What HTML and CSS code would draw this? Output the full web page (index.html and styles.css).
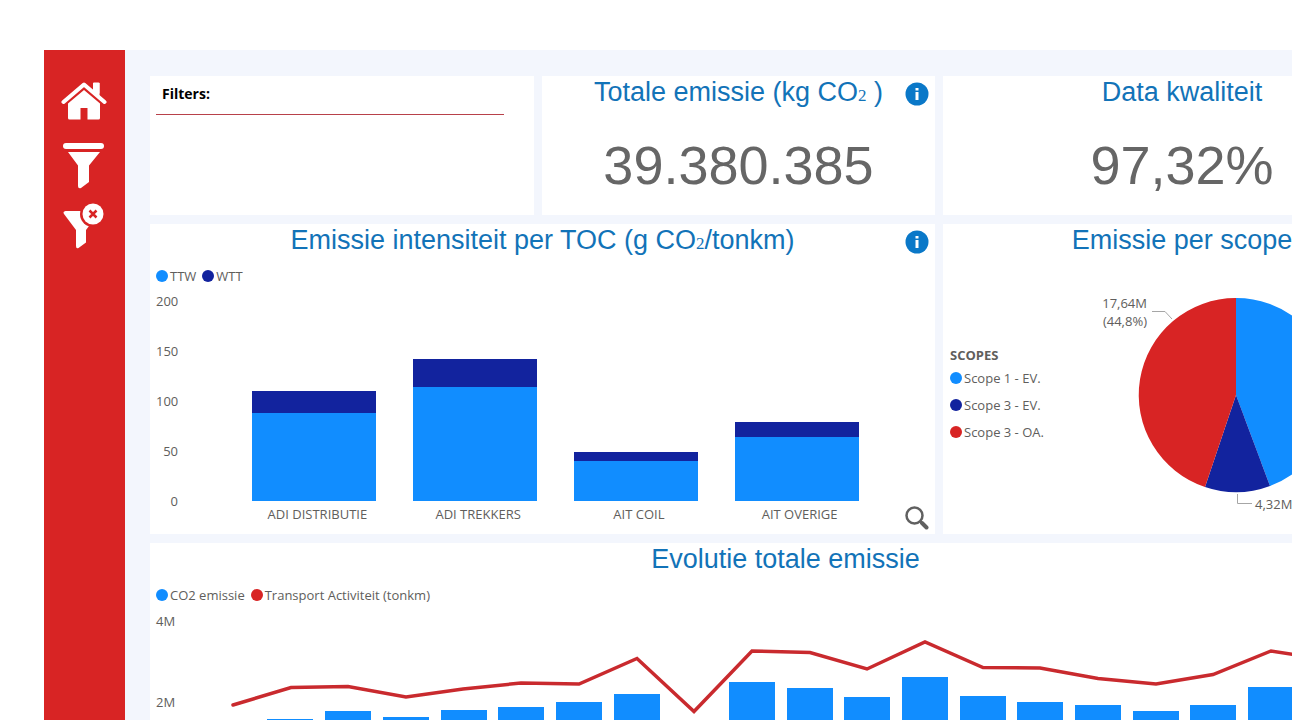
FILE: index.html
```html
<!DOCTYPE html>
<html lang="nl">
<head>
<meta charset="utf-8">
<title>Emissie dashboard</title>
<link rel="stylesheet" href="styles.css">
</head>
<body>
<div class="report">
  <nav class="sidebar" aria-label="Navigatie">
    <button class="nav-button" type="button" aria-label="Home">
      <svg width="46" height="38" viewBox="0 0 46 38"><path fill="#fff" d="M32 1h6.500v14l-6.500-6z"/><path d="M3 20.500L23 3.500L43 20.500" fill="none" stroke="#d82424" stroke-width="8"/><path fill="#fff" d="M32 1.500a1 1 0 0 1 1-1h4.500a1 1 0 0 1 1 1V15l-6.500-6z"/><path fill="#fff" d="M7 21.500L23 8L39 21.500V36a1.500 1.500 0 0 1-1.500 1.500H26.500V26H19.500v11.500H8.500A1.500 1.500 0 0 1 7 36z"/><path d="M2.500 20L23 2.500L43.500 20" fill="none" stroke="#fff" stroke-width="4" stroke-linecap="round" stroke-linejoin="round"/></svg>
    </button>
    <button class="nav-button" type="button" aria-label="Filters tonen">
      <svg width="46" height="48" viewBox="0 0 46 48"><rect x="2" y="1" width="41" height="6" rx="3" fill="#fff"/><path fill="#fff" d="M7 10H39L28 23.500V40L20 46Q17 47 17 44V23.500z"/></svg>
    </button>
    <button class="nav-button" type="button" aria-label="Filters wissen">
      <svg width="46" height="48" viewBox="0 0 46 48"><path fill="#fff" d="M4.500 9H24L28 24L25 28V40.500L17.500 46Q15 47 15 44V28L3 12Q1.500 9.500 4.500 9z"/><circle cx="32" cy="12" r="13" fill="#d82424"/><circle cx="32" cy="12" r="10.500" fill="#fff"/><path d="M28.500 8.500L35.500 15.500M35.500 8.500L28.500 15.500" stroke="#d82424" stroke-width="2.500"/></svg>
    </button>
  </nav>

  <main class="board">
    <section class="card filters">
      <h2 class="filters-title">Filters:</h2>
    </section>

    <section class="card">
      <h2 class="title">Totale emissie (kg CO<sub class="sub">2</sub> )</h2>
      <button class="icon-button info" type="button" aria-label="Informatie over totale emissie">
        <svg width="24" height="24" viewBox="0 0 24 24"><circle cx="12" cy="12" r="11.500" fill="#0a78c8"/><rect x="10.500" y="6" width="3" height="2.500" fill="#fff"/><path d="M10.500 10h3V18h-3z" fill="#fff"/></svg>
      </button>
      <p class="value">39.380.385</p>
    </section>

    <section class="card">
      <h2 class="title">Data kwaliteit</h2>
      <p class="value">97,32%</p>
    </section>

    <section class="card intensity">
      <h2 class="title">Emissie intensiteit per TOC (g CO<sub class="sub">2</sub>/tonkm)</h2>
      <button class="icon-button info" type="button" aria-label="Informatie over emissie intensiteit">
        <svg width="24" height="24" viewBox="0 0 24 24"><circle cx="12" cy="12" r="11.500" fill="#0a78c8"/><rect x="10.500" y="6" width="3" height="2.500" fill="#fff"/><path d="M10.500 10h3V18h-3z" fill="#fff"/></svg>
      </button>
      <ul class="legend">
        <li><i class="dot blue"></i>TTW</li>
        <li><i class="dot navy"></i>WTT</li>
      </ul>
      <div class="chart">
        <div class="axis"><span>200</span><span>150</span><span>100</span><span>50</span><span>0</span></div>
        <div class="columns">
          <div class="column"><div class="stack"><div class="bar navy" style="height:11%"></div><div class="bar blue" style="height:44%"></div></div><span class="category">ADI DISTRIBUTIE</span></div>
          <div class="column"><div class="stack"><div class="bar navy" style="height:14%"></div><div class="bar blue" style="height:57%"></div></div><span class="category">ADI TREKKERS</span></div>
          <div class="column"><div class="stack"><div class="bar navy" style="height:4.5%"></div><div class="bar blue" style="height:20%"></div></div><span class="category">AIT COIL</span></div>
          <div class="column"><div class="stack"><div class="bar navy" style="height:7.5%"></div><div class="bar blue" style="height:32%"></div></div><span class="category">AIT OVERIGE</span></div>
        </div>
      </div>
      <button class="icon-button search" type="button" aria-label="Details">
        <svg width="24" height="24" viewBox="0 0 24 24"><circle cx="9.500" cy="9.500" r="8" fill="none" stroke="#606060" stroke-width="2.500"/><path d="M15 15l2 2" stroke="#606060" stroke-width="2.500"/><path d="M17 17l4.500 4.500" stroke="#606060" stroke-width="4" stroke-linecap="round"/></svg>
      </button>
    </section>

    <section class="card">
      <h2 class="title">Emissie per scope</h2>
      <div class="scope">
        <div class="scope-legend">
          <h3 class="scope-heading">SCOPES</h3>
          <ul class="scope-list">
            <li><i class="dot blue"></i>Scope 1 - EV.</li>
            <li><i class="dot navy"></i>Scope 3 - EV.</li>
            <li><i class="dot red"></i>Scope 3 - OA.</li>
          </ul>
        </div>
        <svg class="pie" width="300" height="250" viewBox="0 0 300 250" role="img" aria-label="Emissie per scope">
          <path class="fill-blue" d="M142 127V30A97 97 0 0 1 176 218z"/>
          <path class="fill-navy" d="M142 127L176 218A97 97 0 0 1 111 219z"/>
          <path class="fill-red" d="M142 127L111 219A97 97 0 0 1 142 30z"/>
          <path class="leader" d="M58 43.500H71L78 51M143.500 226V235.500H158"/>
          <text class="label" x="53" y="40" text-anchor="end">17,64M</text>
          <text class="label" x="53" y="58" text-anchor="end">(44,8%)</text>
          <text class="label" x="161" y="241">4,32M</text>
        </svg>
      </div>
    </section>

    <section class="card evolution">
      <h2 class="title">Evolutie totale emissie</h2>
      <ul class="legend">
        <li><i class="dot blue"></i>CO2 emissie</li>
        <li><i class="dot red"></i>Transport Activiteit (tonkm)</li>
      </ul>
      <svg class="combo" viewBox="0 0 1271 180" role="img" aria-label="Evolutie totale emissie">
        <text class="label" x="6" y="16">4M</text>
        <text class="label" x="6" y="97">2M</text>
        <g class="fill-blue">
          <rect x="60" y="112" width="46" height="62"/>
          <rect x="117" y="109" width="46" height="65"/>
          <rect x="175" y="101" width="46" height="73"/>
          <rect x="233" y="107" width="46" height="67"/>
          <rect x="291" y="100" width="46" height="74"/>
          <rect x="348" y="97" width="46" height="77"/>
          <rect x="406" y="92" width="46" height="82"/>
          <rect x="464" y="84" width="46" height="90"/>
          <rect x="521" y="114" width="46" height="60"/>
          <rect x="579" y="72" width="46" height="102"/>
          <rect x="637" y="78" width="46" height="96"/>
          <rect x="694" y="87" width="46" height="87"/>
          <rect x="752" y="67" width="46" height="107"/>
          <rect x="810" y="86" width="46" height="88"/>
          <rect x="867" y="92" width="46" height="82"/>
          <rect x="925" y="95" width="46" height="79"/>
          <rect x="983" y="101" width="46" height="73"/>
          <rect x="1040" y="95" width="46" height="79"/>
          <rect x="1098" y="77" width="46" height="97"/>
        </g>
        <polyline class="trend" points="83,95 141,77.500 198,76.500 256,87 313,79 371,73 429,74 487,48.500 544,101.500 602,41 660,42.500 717,59 775,32 833,57.500 890,58 948,68.500 1006,74 1063,64.500 1121,41 1179,50"/>
      </svg>
    </section>
  </main>
</div>
</body>
</html>
```

FILE: styles.css
```css
* {
  box-sizing: border-box;
}

body {
  margin: 0;
  height: 100vh;
  overflow: hidden;
  background: #fff;
  color: #605e5c;
  font: 14px/20px "Open Sans", "Noto Sans", sans-serif;
}

h2, h3, p, ul {
  margin: 0;
  padding: 0;
}

ul {
  list-style: none;
}

button {
  padding: 0;
  border: 0;
  background: none;
  cursor: pointer;
}

svg {
  display: block;
}

.report {
  display: flex;
  min-width: 1446px;
  min-height: 100vh;
  padding: 50px 0 0 44px;
}

.sidebar {
  display: flex;
  flex-direction: column;
  align-items: center;
  gap: 12px;
  width: 81px;
  padding: 32px 2px 0 0;
  background: #d82424;
}

.nav-button {
  width: 46px;
}

.nav-button:first-child {
  margin-bottom: 10px;
}

.board {
  flex: 1;
  display: grid;
  grid-template-columns: 384px 393px 1fr;
  grid-template-rows: 139px 310px auto;
  gap: 9px 8px;
  padding: 26px 25px;
  background: #f3f6fd;
}

.card {
  position: relative;
  background: #fff;
}

.intensity {
  grid-column: span 2;
}

.evolution {
  grid-column: 1 / -1;
}

.filters {
  padding: 0 30px 0 6px;
}

.filters-title {
  padding: 7px 6px 10px;
  border-bottom: 1px solid #b8414a;
  color: #000;
  font-size: 14px;
  line-height: 21px;
}

.title {
  color: #1273b8;
  font: 27px/32px "Liberation Sans", Arial, sans-serif;
  text-align: center;
}

.sub {
  font-family: "Liberation Serif", serif;
  font-size: 17px;
  line-height: 1;
  vertical-align: baseline;
}

.value {
  padding-top: 26px;
  color: #666;
  font: 54px/62px "Liberation Sans", Arial, sans-serif;
  text-align: center;
}

.icon-button {
  position: absolute;
  right: 6px;
}

.info {
  top: 6px;
}

.search {
  bottom: 4px;
}

.legend {
  display: flex;
  gap: 6px;
  padding: 10px 6px 0;
  font-size: 13px;
}

.legend li,
.scope-list li {
  display: flex;
  align-items: center;
  gap: 2px;
}

.dot {
  width: 12px;
  height: 12px;
  border-radius: 50%;
}

.blue {
  background: #118dff;
}

.navy {
  background: #12239e;
}

.red {
  background: #d82424;
}

.chart {
  display: flex;
  gap: 56px;
  padding: 5px 58px 0 6px;
}

.axis {
  display: flex;
  flex-direction: column;
  justify-content: space-between;
  width: 22px;
  height: 220px;
  font-size: 13px;
  text-align: right;
}

.columns {
  flex: 1;
  display: grid;
  grid-template-columns: repeat(4, 1fr);
  padding-top: 10px;
}

.column {
  text-align: center;
}

.stack {
  display: flex;
  flex-direction: column;
  justify-content: flex-end;
  width: 77%;
  height: 200px;
  margin: 0 auto;
}

.category {
  display: block;
  padding: 3px 0 0 6px;
  font-size: 13px;
}

.scope {
  display: flex;
  justify-content: space-between;
  padding: 12px 27px 0 7px;
}

.scope-legend {
  padding-top: 77px;
}

.scope-heading {
  font-size: 13px;
  line-height: 20px;
}

.scope-list {
  display: grid;
  gap: 7px;
  padding-top: 3px;
  font-size: 13px;
}

.fill-blue {
  fill: #118dff;
}

.fill-navy {
  fill: #12239e;
}

.fill-red {
  fill: #d82424;
}

.leader {
  fill: none;
  stroke: #a6a6a6;
}

.label {
  fill: #605e5c;
  font-size: 13px;
}

.combo {
  width: 100%;
  padding-top: 5px;
}

.trend {
  fill: none;
  stroke: #c92a2e;
  stroke-width: 3.5;
  stroke-linecap: round;
}
```
